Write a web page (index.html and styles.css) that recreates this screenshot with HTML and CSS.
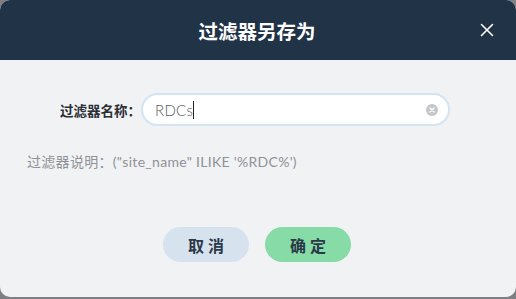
FILE: index.html
```html
<!DOCTYPE html>
<html lang="zh">
<head>
<meta charset="utf-8">
<link rel="stylesheet" href="styles.css">
</head>
<body>
<div class="dialog">
  <div class="header">
    <div class="title">过滤器另存为</div>
    <button class="close" aria-label="close">
      <svg width="14" height="14" viewBox="0 0 14 14"><path d="M1.5 1.5L12.5 12.5M12.5 1.5L1.5 12.5" stroke="#fff" stroke-width="1.6" stroke-linecap="round"/></svg>
    </button>
  </div>
  <div class="body">
    <div class="row">
      <label class="label">过滤器名称：</label>
      <div class="input">
        <span class="value">RDCs</span><span class="caret"></span>
        <span class="clear">
          <svg width="12" height="12" viewBox="0 0 12 12"><circle cx="6" cy="6" r="6" fill="#c4c6c9"/><path d="M4 4L8 8M8 4L4 8" stroke="#fff" stroke-width="1.3" stroke-linecap="round"/></svg>
        </span>
      </div>
    </div>
    <div class="desc">过滤器说明：("site_name" ILIKE '%RDC%')</div>
    <div class="actions">
      <button class="btn cancel">取消</button>
      <button class="btn ok">确定</button>
    </div>
  </div>
</div>
</body>
</html>
```

FILE: styles.css
```css
html, body {
  margin: 0;
  padding: 0;
  height: 100%;
}
body {
  background: #7d7f82;
  font-family: "Lato", "Noto Sans CJK SC", sans-serif;
  overflow: hidden;
}
.dialog {
  width: 516px;
  height: 297px;
  border-radius: 10px;
  overflow: hidden;
  background: #f1f2f4;
  display: flex;
  flex-direction: column;
}
.header {
  height: 60px;
  background: #213347;
  display: flex;
  align-items: center;
  justify-content: center;
  position: relative;
}
.title {
  color: #fff;
  font-size: 19.5px;
  font-weight: 700;
  font-family: "Noto Sans CJK SC", sans-serif;
  margin-left: -2px;
}
.close {
  position: absolute;
  right: 22px;
  top: 23px;
  width: 14px;
  height: 14px;
  padding: 0;
  border: 0;
  background: none;
  display: flex;
}
.body {
  flex: 1;
  display: flex;
  flex-direction: column;
}
.row {
  display: flex;
  align-items: center;
  margin-top: 33px;
  padding-left: 60px;
}
.label {
  font-size: 13.5px;
  font-weight: 700;
  color: #2b2f35;
  font-family: "Noto Sans CJK SC", sans-serif;
  white-space: nowrap;
}
.input {
  width: 309px;
  height: 33px;
  box-sizing: border-box;
  border: 2px solid #d3e4f3;
  border-radius: 17px;
  background: #fff;
  display: flex;
  align-items: center;
  padding-left: 12px;
  padding-right: 10px;
}
.value {
  font-size: 15px;
  color: #5a5e63;
  font-weight: 300;
  letter-spacing: 0.3px;
}
.caret {
  width: 1px;
  height: 18px;
  background: #222;
}
.clear {
  margin-left: auto;
  display: flex;
}
.desc {
  margin-top: 25px;
  margin-left: 27px;
  font-size: 14px;
  color: #8e9196;
  font-weight: 400;
  font-family: "Lato", "Noto Sans CJK SC", sans-serif;
  letter-spacing: 0.3px;
}
.actions {
  display: flex;
  justify-content: center;
  gap: 16px;
  margin-top: 56px;
  padding-right: 2px;
}
.btn {
  width: 86px;
  height: 35px;
  border: 0;
  border-radius: 18px;
  font-family: "Noto Sans CJK SC", sans-serif;
  font-size: 16px;
  font-weight: 700;
  letter-spacing: 4px;
  text-indent: 4px;
  color: #2a3848;
  padding: 0;
}
.cancel {
  background: #d6e3ee;
}
.ok {
  background: #86dba6;
}
```
